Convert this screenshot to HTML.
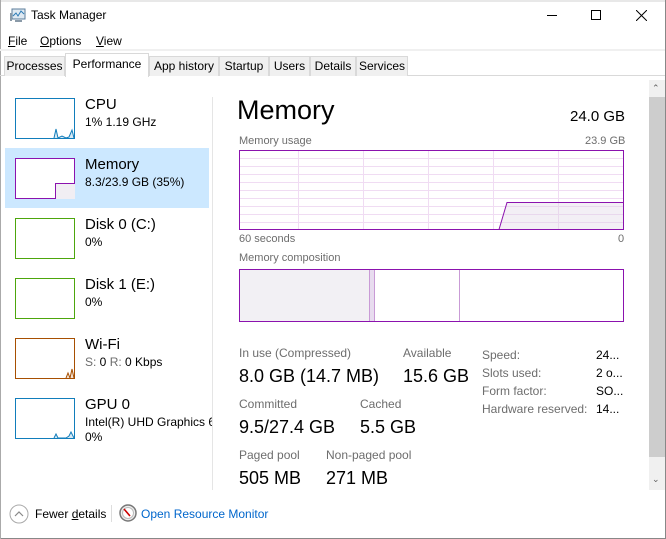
<!DOCTYPE html><html><head><style>
*{margin:0;padding:0;box-sizing:border-box}
body{width:666px;height:539px;position:relative;background:#fff;font-family:"Liberation Sans",sans-serif;font-size:12px;color:#000;overflow:hidden}
.a{position:absolute;white-space:nowrap}
.g{color:#6d6d6d}
.tab{position:absolute;top:56px;height:20px;background:#f0f0f0;border:1px solid #d9d9d9;border-bottom:none;font-size:12px;text-align:center;line-height:19px}
.th{position:absolute;left:15px;width:60px;height:41px;background:#fff}
.big{font-size:18px}
</style></head><body>
<div class="a" style="left:0;top:0;width:666px;height:2px;background:#e8e8e8"></div>
<div class="a" style="left:665px;top:0;width:1px;height:539px;background:#888"></div>
<div class="a" style="left:0;top:538px;width:666px;height:1px;background:#888"></div>
<div class="a" style="left:0;top:0;width:1px;height:539px;background:#aaa"></div>
<!-- title -->
<svg class="a" style="left:9px;top:8px" width="18" height="16"><rect x="3" y="1" width="13" height="10" fill="#dfe9f2" stroke="#5b7d9b"/><polyline points="4,8 7,5 9,8 12,3 15,6" fill="none" stroke="#2a7ab5"/><rect x="1" y="5" width="2" height="8" fill="#8a9aa8"/><rect x="6" y="12" width="7" height="2" fill="#8a9aa8"/></svg>
<div class="a" style="left:31px;top:8px;font-size:12px">Task Manager</div>
<div class="a" style="left:547px;top:15px;width:10px;height:1px;background:#000"></div>
<div class="a" style="left:591px;top:10px;width:10px;height:10px;border:1px solid #000"></div>
<svg class="a" style="left:636px;top:10px" width="11" height="11"><path d="M0 0L11 11M11 0L0 11" stroke="#000" stroke-width="1"/></svg>
<!-- menu -->
<div class="a" style="left:8px;top:34px"><u>F</u>ile</div>
<div class="a" style="left:40px;top:34px"><u>O</u>ptions</div>
<div class="a" style="left:96px;top:34px"><u>V</u>iew</div>
<div class="a" style="left:0;top:49px;width:665px;height:2px;background:#f0f0f0"></div>
<!-- tabs -->
<div class="a" style="left:0;top:75px;width:665px;height:1px;background:#d9d9d9"></div>
<div class="tab" style="left:4px;width:61px">Processes</div>
<div class="tab" style="left:149px;width:70px">App history</div>
<div class="tab" style="left:219px;width:50px">Startup</div>
<div class="tab" style="left:269px;width:41px">Users</div>
<div class="tab" style="left:310px;width:46px">Details</div>
<div class="tab" style="left:356px;width:52px">Services</div>
<div class="tab" style="left:65px;top:53px;width:84px;height:24px;background:#fff;line-height:20px">Performance</div>
<!-- left list -->
<div class="a" style="left:212px;top:97px;width:1px;height:393px;background:#e5e5e5"></div>
<div class="a" style="left:5px;top:148px;width:204px;height:60px;background:#cce8ff"></div>
<div class="th" style="top:98px;border:1px solid #117dbb"></div>
<svg class="a" style="left:16px;top:99px" width="58" height="39"><polyline points="38,39 40,30 42,39 46,37 50,39 53,38 56,31 58,39" fill="#d9eaf5" stroke="#117dbb"/></svg>
<div class="a" style="left:85px;top:96px;font-size:15px">CPU</div>
<div class="a" style="left:85px;top:115px">1% 1.19 GHz</div>
<div class="th" style="top:158px;border:1px solid #8b12ae"></div>
<div class="a" style="left:55px;top:183px;width:20px;height:16px;background:#f1eef3;border:1px solid #8b12ae;border-right:none;border-bottom:none"></div>
<div class="a" style="left:85px;top:156px;font-size:15px">Memory</div>
<div class="a" style="left:85px;top:175px">8.3/23.9 GB (35%)</div>
<div class="th" style="top:218px;border:1px solid #4da60c"></div>
<div class="a" style="left:85px;top:216px;font-size:15px">Disk 0 (C:)</div>
<div class="a" style="left:85px;top:235px">0%</div>
<div class="th" style="top:278px;border:1px solid #4da60c"></div>
<div class="a" style="left:85px;top:276px;font-size:15px">Disk 1 (E:)</div>
<div class="a" style="left:85px;top:295px">0%</div>
<div class="th" style="top:338px;border:1px solid #a74f01"></div>
<svg class="a" style="left:16px;top:339px" width="58" height="39"><polyline points="50,39 52,34 54,39 56,30 58,39" fill="#f3e4d8" stroke="#a74f01"/></svg>
<div class="a" style="left:85px;top:336px;font-size:15px">Wi-Fi</div>
<div class="a" style="left:85px;top:355px"><span class="g">S:</span> 0 <span class="g">R:</span> 0 Kbps</div>
<div class="th" style="top:398px;border:1px solid #117dbb"></div>
<svg class="a" style="left:16px;top:399px" width="58" height="39"><polyline points="38,39 40,35 42,39 50,39 53,37 55,33 58,39" fill="#d9eaf5" stroke="#117dbb"/></svg>
<div class="a" style="left:85px;top:396px;font-size:15px">GPU 0</div>
<div class="a" style="left:85px;top:415px;width:127px;overflow:hidden">Intel(R) UHD Graphics 620</div>
<div class="a" style="left:85px;top:430px">0%</div>
<!-- right -->
<div class="a" style="left:237px;top:95px;font-size:27px">Memory</div>
<div class="a" style="left:570px;top:108px;font-size:15px">24.0 GB</div>
<div class="a g" style="left:239px;top:135px;font-size:11px">Memory usage</div>
<div class="a g" style="left:585px;top:135px;font-size:11px">23.9 GB</div>
<svg class="a" style="left:239px;top:150px" width="385" height="80">
<g stroke="#f0dcf3" stroke-width="1">
<path d="M0 8.5H385M0 16.5H385M0 24.5H385M0 32.5H385M0 40.5H385M0 48.5H385M0 56.5H385M0 64.5H385M0 72.5H385"/>
<path d="M59.5 0V80M124.5 0V80M189.5 0V80M254.5 0V80M319.5 0V80"/>
</g>
<path d="M260 79.5L268 52.5H385V80H260Z" fill="rgba(220,210,225,0.35)"/>
<polyline points="260,79.5 268,52.5 385,52.5" fill="none" stroke="#8b12ae"/>
<rect x="0.5" y="0.5" width="384" height="79" fill="none" stroke="#8b12ae"/>
</svg>
<div class="a g" style="left:239px;top:233px;font-size:11px">60 seconds</div>
<div class="a g" style="left:618px;top:233px;font-size:11px">0</div>
<div class="a g" style="left:239px;top:252px;font-size:11px">Memory composition</div>
<svg class="a" style="left:239px;top:269px" width="385" height="53">
<rect x="0" y="0" width="130" height="53" fill="#f2f0f4"/>
<rect x="130" y="0" width="5" height="53" fill="#e8dcef"/>
<path d="M130.5 0V53M135.5 0V53M220.5 0V53" stroke="#c99bd6"/>
<rect x="0.5" y="0.5" width="384" height="52" fill="none" stroke="#8b12ae"/>
</svg>
<div class="a g" style="left:239px;top:346px">In use (Compressed)</div>
<div class="a big" style="left:239px;top:366px">8.0 GB (14.7 MB)</div>
<div class="a g" style="left:403px;top:346px">Available</div>
<div class="a big" style="left:403px;top:366px">15.6 GB</div>
<div class="a g" style="left:239px;top:397px">Committed</div>
<div class="a big" style="left:239px;top:417px">9.5/27.4 GB</div>
<div class="a g" style="left:360px;top:397px">Cached</div>
<div class="a big" style="left:360px;top:417px">5.5 GB</div>
<div class="a g" style="left:239px;top:448px">Paged pool</div>
<div class="a big" style="left:239px;top:468px">505 MB</div>
<div class="a g" style="left:326px;top:448px">Non-paged pool</div>
<div class="a big" style="left:326px;top:468px">271 MB</div>
<div class="a g" style="left:482px;top:346px;line-height:18px">Speed:<br>Slots used:<br>Form factor:<br>Hardware reserved:</div>
<div class="a" style="left:596px;top:346px;line-height:18px">24...<br>2 o...<br>SO...<br>14...</div>
<!-- scrollbar -->
<div class="a" style="left:649px;top:80px;width:16px;height:410px;background:#f0f0f0"></div>
<div class="a" style="left:649px;top:97px;width:16px;height:360px;background:#cdcdcd"></div>
<div class="a" style="left:652px;top:83px;font-size:9px;color:#606060">&#8963;</div>
<div class="a" style="left:652px;top:474px;font-size:9px;color:#606060">&#8964;</div>
<!-- footer -->
<svg class="a" style="left:9px;top:504px" width="20" height="20"><circle cx="10" cy="10" r="9" fill="#fff" stroke="#aaa"/><polyline points="6,12 10,8 14,12" fill="none" stroke="#888" stroke-width="1.2"/></svg>
<div class="a" style="left:35px;top:507px">Fewer <u>d</u>etails</div>
<div class="a" style="left:111px;top:505px;width:1px;height:17px;background:#ddd"></div>
<svg class="a" style="left:119px;top:504px" width="18" height="18"><circle cx="9" cy="9" r="8" fill="#eee" stroke="#777" stroke-width="1.5"/><circle cx="9" cy="9" r="5.5" fill="#fff" stroke="#bbb"/><path d="M5 5L11 12" stroke="#c00" stroke-width="1.6"/></svg>
<div class="a" style="left:141px;top:507px;color:#0066cc">Open Resource Monitor</div>
</body></html>
